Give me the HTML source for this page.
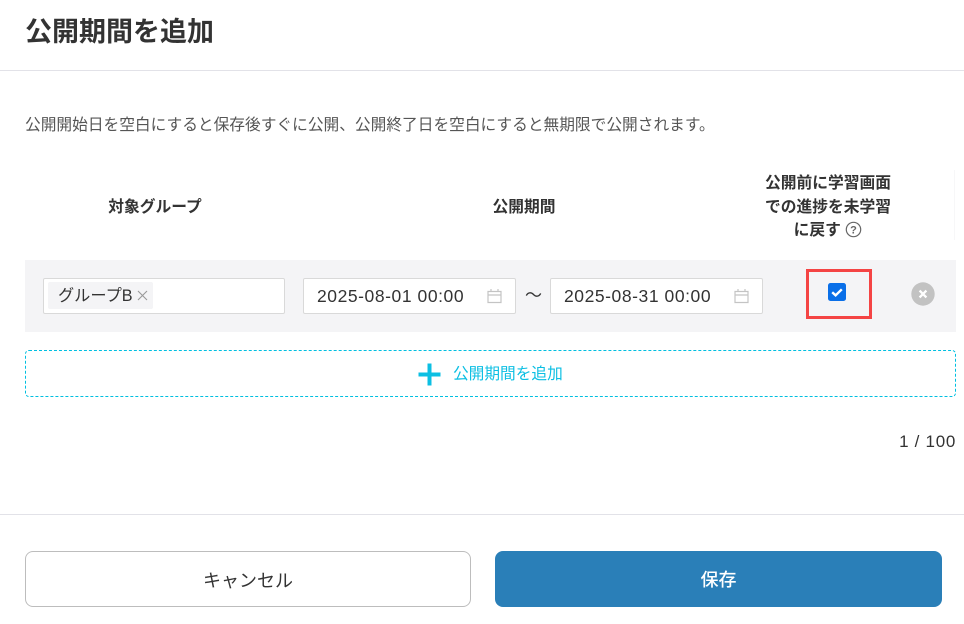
<!DOCTYPE html>
<html lang="ja">
<head>
<meta charset="utf-8">
<style>
html,body{margin:0;padding:0;width:964px;height:624px;overflow:hidden;background:#fff}
body{position:relative;font-family:"Liberation Sans","Noto Sans CJK JP",sans-serif;color:#333}
.a{position:absolute;white-space:nowrap}
.box{position:absolute;box-sizing:border-box;background:#fff;border:1px solid #d9d9d9;border-radius:2px}
.date{font-size:17.5px;letter-spacing:.56px;color:#333}
.hd{font-size:15.75px;font-weight:700;text-align:center;color:#333}
</style>
</head>
<body>
<div class="a" style="left:25px;top:12px;font-size:27px;line-height:40px;font-weight:700;color:#333">公開期間を追加</div>
<div class="a" style="left:0;top:70px;width:964px;height:1px;background:#e2e2e8"></div>

<div class="a" style="left:25px;top:114px;font-size:15.71px;line-height:24px;color:#555">公開開始日を空白にすると保存後すぐに公開、公開終了日を空白にすると無期限で公開されます。</div>

<div class="a hd" style="left:25px;top:195px;width:260px;line-height:26px">対象グループ</div>
<div class="a hd" style="left:303px;top:195px;width:442px;line-height:26px">公開期間</div>
<div class="a hd" style="left:748px;top:172px;width:160px;line-height:23.5px">公開前に学習画面<br>での進捗を未学習<br>に戻す <svg width="17" height="17" viewBox="0 0 17 17" style="vertical-align:-3px"><circle cx="8.5" cy="8.5" r="7.2" fill="none" stroke="#666" stroke-width="1.2"/><text x="8.5" y="12.4" text-anchor="middle" font-size="11" font-weight="700" fill="#666" font-family="Liberation Sans">?</text></svg></div>
<div class="a" style="left:954px;top:170px;width:1px;height:70px;background:#f7f7f8"></div>

<div class="a" style="left:25px;top:260px;width:931px;height:72px;background:#f4f4f6"></div>

<div class="box" style="left:43px;top:278px;width:242px;height:36px"></div>
<div class="a" style="left:48px;top:282px;width:105px;height:27px;background:#f4f4f6;border-radius:2px"></div>
<div class="a" style="left:58px;top:283px;font-size:16.2px;line-height:27px;color:#333">グループB</div>
<svg class="a" style="left:137px;top:290px" width="11" height="11" viewBox="0 0 11 11"><path d="M1 1L10 10M10 1L1 10" stroke="#999" stroke-width="1.1" fill="none"/></svg>

<div class="box date" style="left:303px;top:278px;width:213px;height:36px;padding-left:13px;line-height:34px">2025-08-01 00:00</div>
<svg class="a" style="left:487px;top:288px" width="15" height="16" viewBox="0 0 15 16"><path d="M1 3.5H14V14.5H1ZM1 7H14M4 1V4M11 1V4" fill="none" stroke="#c4c4c4" stroke-width="1.2"/></svg>
<div class="a" style="left:525px;top:284px;font-size:17px;line-height:24px;color:#333">～</div>
<div class="box date" style="left:550px;top:278px;width:213px;height:36px;padding-left:13px;line-height:34px">2025-08-31 00:00</div>
<svg class="a" style="left:734px;top:288px" width="15" height="16" viewBox="0 0 15 16"><path d="M1 3.5H14V14.5H1ZM1 7H14M4 1V4M11 1V4" fill="none" stroke="#c4c4c4" stroke-width="1.2"/></svg>

<div class="a" style="left:806px;top:269px;width:66px;height:50px;box-sizing:border-box;border:3px solid #f44444"></div>
<svg class="a" style="left:828px;top:283px" width="18" height="18" viewBox="0 0 18 18"><rect width="18" height="18" rx="2.5" fill="#0a6fe8"/><path d="M4.2 9.2L7.6 12.3L13.8 6.3" fill="none" stroke="#fff" stroke-width="2.4"/></svg>

<svg class="a" style="left:911px;top:282px" width="24" height="24" viewBox="0 0 24 24"><circle cx="12" cy="12" r="11.7" fill="#c2c2c2"/><path d="M8.6 8.6L15.4 15.4M15.4 8.6L8.6 15.4" stroke="#fff" stroke-width="2.3" fill="none"/></svg>

<div class="a" style="left:25px;top:350px;width:931px;height:47px;box-sizing:border-box;border:1px dashed #00bfe0;border-radius:4px"></div>
<svg class="a" style="left:418px;top:363px" width="23" height="23" viewBox="0 0 23 23"><path d="M11.5 0.5V22.5M0.5 11.5H22.5" stroke="#0cbfe3" stroke-width="4" fill="none"/></svg>
<div class="a" style="left:453px;top:363px;font-size:15.7px;line-height:24px;color:#0cbfe3">公開期間を追加</div>

<div class="a" style="right:8px;top:431px;font-size:17px;line-height:22px;letter-spacing:.7px;color:#333">1 / 100</div>

<div class="a" style="left:0;top:514px;width:964px;height:1px;background:#e2e2e8"></div>

<div class="a" style="left:25px;top:551px;width:446px;height:56px;box-sizing:border-box;border:1px solid #bdbdbd;border-radius:8px;background:#fff;text-align:center;font-size:18px;line-height:58px;color:#333">キャンセル</div>
<div class="a" style="left:495px;top:551px;width:447px;height:56px;border-radius:8px;background:#2a7fb8;text-align:center;font-size:18px;line-height:58px;font-weight:500;color:#fff">保存</div>
</body>
</html>
